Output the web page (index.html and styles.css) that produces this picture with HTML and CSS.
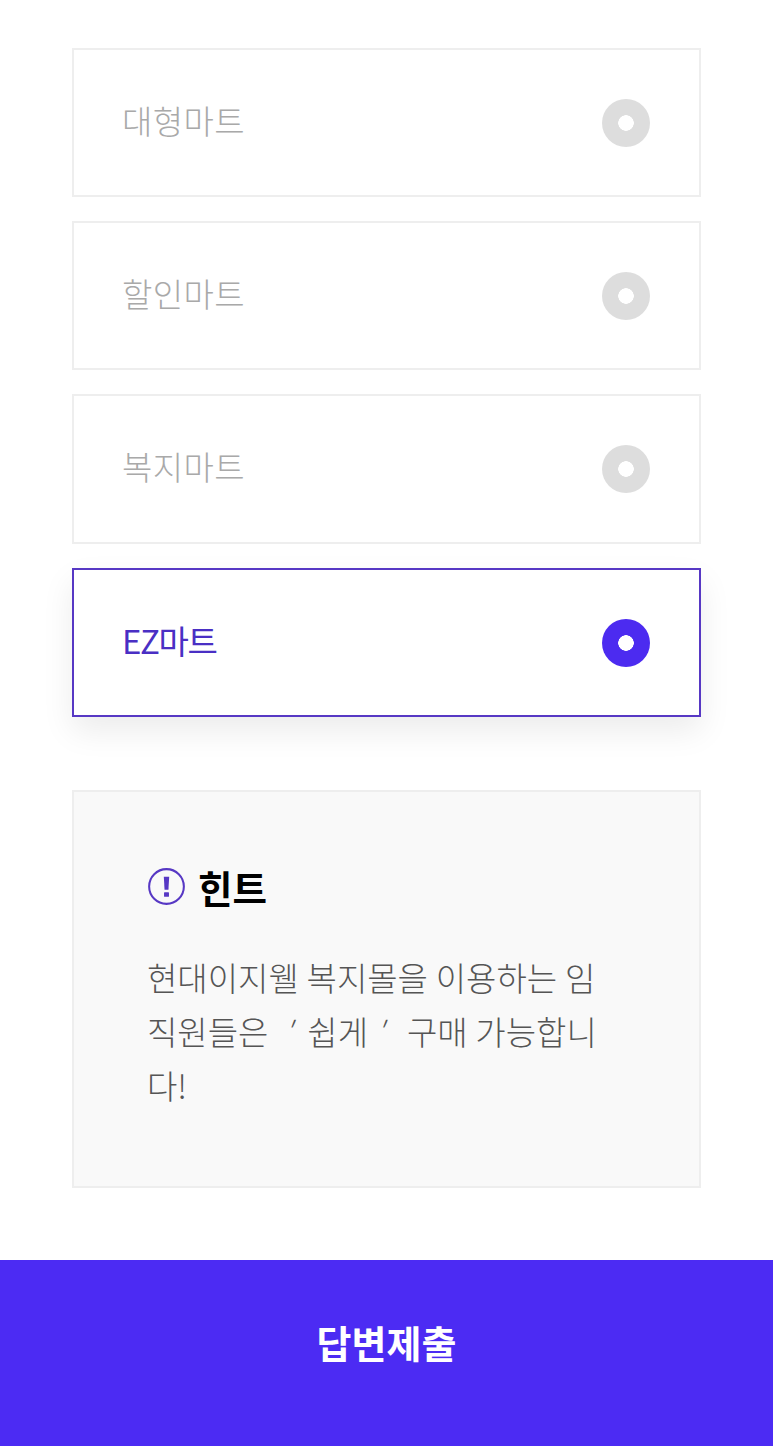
FILE: index.html
```html
<!DOCTYPE html>
<html lang="ko">
<head>
<meta charset="utf-8">
<title>퀴즈</title>
<link rel="stylesheet" href="styles.css">
</head>
<body>
<main class="content">
  <ul class="options">
    <li class="option"><span class="label">대형마트</span><span class="radio"></span></li>
    <li class="option"><span class="label">할인마트</span><span class="radio"></span></li>
    <li class="option"><span class="label">복지마트</span><span class="radio"></span></li>
    <li class="option selected"><span class="label">EZ마트</span><span class="radio"></span></li>
  </ul>
  <section class="hint">
    <h2 class="hint-title">
      <svg class="hint-icon" viewBox="0 0 36 36" aria-hidden="true">
        <circle cx="18" cy="18" r="16.9" fill="none" stroke="#5738c4" stroke-width="2"/>
        <path d="M15.4 8.6h5.2l-.7 12.6h-3.8z" fill="#5738c4"/>
        <rect x="15.6" y="23.6" width="4.8" height="4.4" rx=".6" fill="#5738c4"/>
      </svg>
      힌트
    </h2>
    <p class="hint-text">현대이지웰 복지몰을 이용하는 임직원들은 &nbsp;<span class="quote">′</span> 쉽게 <span class="quote">′</span>&nbsp; 구매 가능합니다!</p>
  </section>
</main>
<button class="submit" type="button">답변제출</button>
</body>
</html>
```
FILE: styles.css
```css
* { box-sizing: border-box; }
html, body { margin: 0; padding: 0; }
body {
  width: 773px;
  height: 1446px;
  background: #fff;
  font-family: "Noto Sans CJK KR", "Noto Sans", sans-serif;
  display: flex;
  flex-direction: column;
  overflow: hidden;
}
.content { flex: 1; padding: 48px 72px 0; }
.options {
  list-style: none;
  margin: 0;
  padding: 0;
  display: flex;
  flex-direction: column;
  gap: 24px;
}
.option {
  height: 149.2px;
  border: 2px solid #eeeeee;
  background: #fff;
  display: flex;
  align-items: center;
  justify-content: space-between;
  padding: 0 49px 0 48px;
}
.label {
  font-size: 33px;
  font-weight: 300;
  color: #a9a9a9;
  letter-spacing: 0.4px;
  line-height: 1;
  position: relative;
  top: -2px;
}
.radio {
  width: 48px;
  height: 48px;
  border-radius: 50%;
  background: radial-gradient(circle, #fff 0 7.5px, #dddddd 8px);
}
.selected {
  border-color: #5738c4;
  box-shadow: 0 14px 30px rgba(0, 0, 0, 0.08);
  padding-top: 1px;
}
.selected .label { color: #4a2fc4; font-weight: 400; letter-spacing: -1.4px; }
.selected .radio { background: radial-gradient(circle, #fff 0 7.5px, #4c2bf0 8px); }
.hint {
  margin-top: 73.2px;
  height: 398px;
  background: #f9f9f9;
  border: 2px solid #eeeeee;
  padding: 70px 74px 0;
}
.hint-title {
  margin: 0;
  display: flex;
  align-items: center;
  gap: 13px;
  font-size: 37.5px;
  font-weight: 700;
  color: #000;
  line-height: 50px;
}
.hint-icon { width: 37px; height: 37px; flex: none; }
.hint-text {
  margin: 38px 0 0 -1px;
  width: 460px;
  font-size: 33px;
  font-weight: 300;
  line-height: 54px;
  color: #555;
  word-spacing: -1.5px;
  word-break: break-all;
}
.quote { margin: 0 7.4px 0 0; font-style: italic; }
.submit {
  flex: none;
  height: 186px;
  border: 0;
  background: #4c2bf3;
  color: #fff;
  font-family: inherit;
  font-size: 38px;
  font-weight: 700;
  padding: 0 0 24px;
}
```
